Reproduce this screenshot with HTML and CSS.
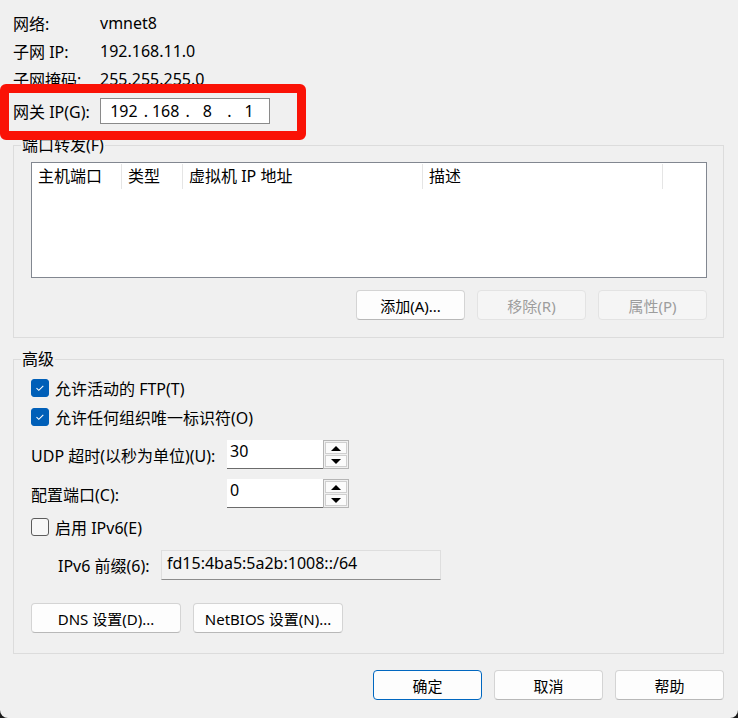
FILE: index.html
```html
<!DOCTYPE html>
<html lang="zh-CN">
<head>
    <meta charset="UTF-8">
    <title>虚拟网络编辑器 - NAT 设置</title>
    <link rel="stylesheet" href="styles.css">
</head>
<body>
    <div class="dialog">
        <!-- network info -->
        <div class="info">
            <span class="info-label">网络:</span><span>vmnet8</span>
            <span class="info-label">子网 IP:</span><span>192.168.11.0</span>
            <span class="info-label">子网掩码:</span><span>255.255.255.0</span>
        </div>

        <div class="gateway-row">
            <span class="gateway-label">网关 IP(G):</span>
            <div class="ip-box">
                <span class="octet">192</span><span class="dot">.</span>
                <span class="octet">168</span><span class="dot">.</span>
                <span class="octet">8</span><span class="dot">.</span>
                <span class="octet">1</span>
            </div>
        </div>
        <div class="highlight"></div>

        <fieldset class="group group-ports">
            <legend>端口转发(F)</legend>
            <div class="table">
                <div class="table-head">
                    <span class="col col-port">主机端口</span>
                    <span class="col col-type">类型</span>
                    <span class="col col-vm">虚拟机 IP 地址</span>
                    <span class="col col-desc">描述</span>
                </div>
            </div>
            <div class="btn-row">
                <button class="btn">添加(A)...</button>
                <button class="btn" disabled>移除(R)</button>
                <button class="btn" disabled>属性(P)</button>
            </div>
        </fieldset>

        <fieldset class="group group-adv">
            <legend>高级</legend>

            <label class="check-row first">
                <span class="check checked">
                    <svg width="18" height="18" viewBox="0 0 18 18"><path d="M5.5 9.2 L7.8 11.3 L12.3 6.8" fill="none" stroke="#fff" stroke-width="1.1"/></svg>
                </span>
                允许活动的 FTP(T)
            </label>
            <label class="check-row second">
                <span class="check checked">
                    <svg width="18" height="18" viewBox="0 0 18 18"><path d="M5.5 9.2 L7.8 11.3 L12.3 6.8" fill="none" stroke="#fff" stroke-width="1.1"/></svg>
                </span>
                允许任何组织唯一标识符(O)
            </label>

            <div class="field-row udp-row">
                <span class="field-label">UDP 超时(以秒为单位)(U):</span>
                <div class="spin">
                    <span class="spin-value">30</span>
                    <div class="spin-btns">
                        <span class="spin-btn"><svg width="12" height="7" viewBox="0 0 12 7"><path d="M1 6 L6 1 L11 6 Z"/></svg></span>
                        <span class="spin-btn"><svg width="12" height="7" viewBox="0 0 12 7"><path d="M1 1 L6 6 L11 1 Z"/></svg></span>
                    </div>
                </div>
            </div>
            <div class="field-row port-row">
                <span class="field-label">配置端口(C):</span>
                <div class="spin">
                    <span class="spin-value">0</span>
                    <div class="spin-btns">
                        <span class="spin-btn"><svg width="12" height="7" viewBox="0 0 12 7"><path d="M1 6 L6 1 L11 6 Z"/></svg></span>
                        <span class="spin-btn"><svg width="12" height="7" viewBox="0 0 12 7"><path d="M1 1 L6 6 L11 1 Z"/></svg></span>
                    </div>
                </div>
            </div>

            <label class="check-row ipv6-row">
                <span class="check"></span>
                启用 IPv6(E)
            </label>
            <div class="prefix-row">
                <span class="prefix-label">IPv6 前缀(6):</span>
                <span class="prefix-box">fd15:4ba5:5a2b:1008::/64</span>
            </div>

            <div class="btn-row left">
                <button class="btn wide">DNS 设置(D)...</button>
                <button class="btn wide">NetBIOS 设置(N)...</button>
            </div>
        </fieldset>

        <div class="btn-row footer">
            <button class="btn primary">确定</button>
            <button class="btn">取消</button>
            <button class="btn">帮助</button>
        </div>
    </div>
</body>
</html>
```

FILE: styles.css
```css
* {
    box-sizing: border-box;
}

body {
    margin: 0;
    background-color: #1b1b1b;
    font-family: "Noto Sans", "Noto Sans CJK SC", sans-serif;
    font-size: 16px;
    color: #000;
}

.dialog {
    position: relative;
    width: 738px;
    height: 718px;
    background-color: #f0f0f0;
    border-radius: 0 0 8px 8px;
    padding: 9px 14px 0 13px;
    overflow: hidden;
}

/* top info lines */
.info {
    display: grid;
    grid-template-columns: 87px auto;
    grid-auto-rows: 28px;
    align-items: center;
}

.gateway-row {
    display: flex;
    align-items: center;
    height: 26px;
    margin-top: 5px;
}

.gateway-label {
    width: 87px;
}

.ip-box {
    display: flex;
    align-items: center;
    width: 170px;
    height: 26px;
    padding-left: 3px;
    background-color: #fff;
    border: 1px solid #8a8a8a;
}

.octet {
    width: 40px;
    text-align: center;
}

.dot {
    width: 2px;
    text-align: center;
}

/* red annotation box around the gateway */
.highlight {
    position: absolute;
    left: 0;
    top: 84px;
    width: 306px;
    height: 56px;
    border: 9px solid #fa1206;
    border-radius: 6px;
}

/* group boxes */
.group {
    margin: 0;
    border: 1px solid #dcdcdc;
    min-width: 0;
}

.group legend {
    padding: 0 1px;
    margin-left: -10px;
    line-height: 20px;
}

.group-ports {
    margin-top: 11px;
    padding: 7px 16px 17px 17px;
}

.table {
    height: 116px;
    background-color: #fff;
    border: 1px solid #828790;
}

.table-head {
    display: flex;
    height: 26px;
    align-items: center;
}

.col {
    height: 25px;
    line-height: 25px;
    padding-left: 6px;
    border-right: 1px solid #e5e5e5;
}

.col-port { width: 90px; }
.col-type { width: 61px; }
.col-vm { width: 240px; }
.col-desc { width: 240px; }

.btn-row {
    display: flex;
    justify-content: flex-end;
    gap: 12px;
    margin-top: 12px;
}

.btn-row.left {
    justify-content: flex-start;
    margin-top: 23px;
}

.btn {
    width: 109px;
    height: 30px;
    padding: 0;
    font-family: "Noto Sans", "Noto Sans CJK SC", sans-serif;
    font-size: 15px;
    color: #000;
    background-color: #fdfdfd;
    border: 1px solid #d4d4d4;
    border-bottom-color: #b8b8b8;
    border-radius: 4px;
}

.btn:disabled {
    color: #9d9d9d;
    background-color: #f5f5f5;
    border-color: #e3e3e3;
}

.btn.wide {
    width: 150px;
}

.btn.primary {
    border: 1px solid #0067c0;
}

.footer {
    margin-top: 16px;
}

/* advanced group */
.group-adv {
    margin-top: 11px;
    padding: 7px 16px 20px 17px;
}

.check-row {
    display: flex;
    align-items: center;
    gap: 6px;
    height: 24px;
}

.check-row.second {
    margin-top: 5px;
}

.check-row.ipv6-row {
    margin-top: 7px;
}

.check {
    display: inline-block;
    width: 18px;
    height: 18px;
    border: 1px solid #5c5c5c;
    border-radius: 3px;
    background-color: #f7f7f7;
}

.check.checked {
    background-color: #005fb8;
    border-color: #005fb8;
}

.check svg {
    display: block;
    margin: -1px;
}

.field-row {
    display: flex;
    align-items: center;
    height: 29px;
}

.udp-row {
    margin-top: 11px;
}

.port-row {
    margin-top: 10px;
}

.field-label {
    width: 196px;
}

.spin {
    display: flex;
    height: 29px;
}

.spin-value {
    width: 96px;
    height: 29px;
    padding: 0 3px;
    background-color: #fff;
    border-bottom: 1px solid #6b6b6b;
}

.spin-btns {
    display: flex;
    flex-direction: column;
    width: 26px;
    height: 29px;
    padding: 1px;
    border: 1px solid #b5b5b5;
    background-color: #f0f0f0;
    gap: 1px;
}

.spin-btn {
    flex: 1;
    display: flex;
    align-items: center;
    justify-content: center;
    background-color: #fbfbfb;
    border: 1px solid #cfcfcf;
}

.spin-btn svg {
    display: block;
}

.prefix-row {
    display: flex;
    align-items: center;
    height: 30px;
    margin-top: 11px;
    padding-left: 27px;
}

.prefix-label {
    width: 103px;
}

.prefix-box {
    width: 280px;
    height: 30px;
    padding: 1px 5px 0;
    background-color: #f2f2f2;
    border: 1px solid #dedede;
    border-bottom-color: #8c8c8c;
}
```
